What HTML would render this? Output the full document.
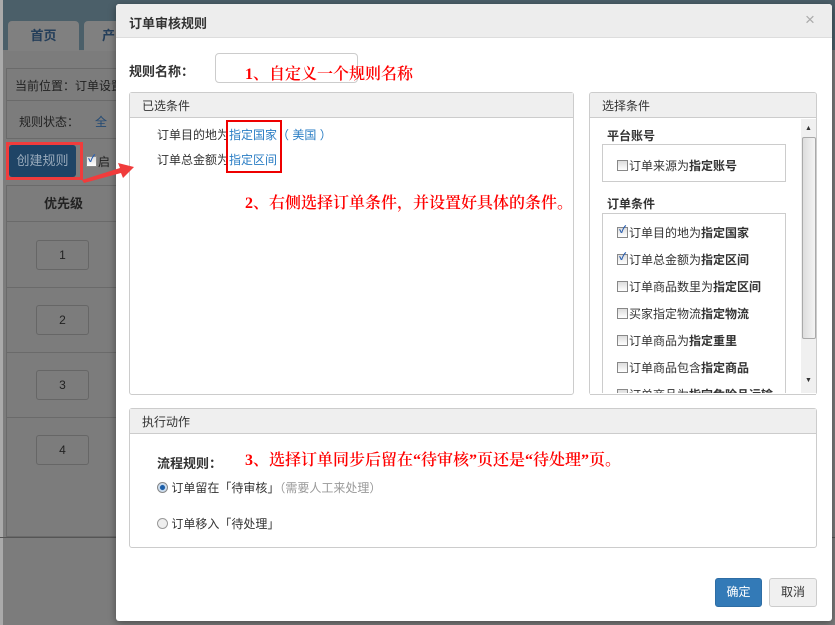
<!DOCTYPE html>
<html><head><meta charset="utf-8"><style>
*{box-sizing:border-box;margin:0;padding:0}
body{width:835px;height:625px;position:relative;overflow:hidden;background:#7c7c7c;font-family:"Liberation Sans","Noto Sans CJK SC",sans-serif;font-size:12px;color:#333}
.a{position:absolute;white-space:nowrap}
.red{color:#f00;font-family:"Liberation Serif","Noto Serif CJK SC",serif;font-size:16px;font-weight:600;white-space:nowrap}
.cb{display:inline-block;width:11px;height:11px;border:1px solid #888;background:linear-gradient(#ddd,#fff);vertical-align:-1px;margin-right:1px;position:relative}
.cb.on::after{content:"✓";position:absolute;left:1px;top:-3px;font-size:10px;line-height:12px;color:#2a5fb0;font-weight:bold}
.panel{position:absolute;border:1px solid #ccc;border-radius:3px;background:#fff}
.ph{height:25px;background:#efefef;border-bottom:1px solid #ccc;padding:4px 12px;font-size:12px;color:#333}
</style></head><body>
<div class="a" style="left:0;top:0;width:835px;height:50px;background:#4b5f69"></div>
<div class="a" style="left:0;top:0;width:3px;height:625px;background:#aaa"></div>
<div class="a" style="left:8px;top:21px;width:71px;height:30px;background:#808080;border-radius:4px 4px 0 0;color:#243e5a;font-size:13px;font-weight:bold;text-align:center;line-height:30px">首页</div>
<div class="a" style="left:84px;top:21px;width:40px;height:30px;background:#808080;border-radius:4px 4px 0 0;color:#243e5a;font-size:13px;font-weight:bold;padding-left:18px;line-height:30px">产</div>
<div class="a" style="left:6px;top:68px;width:120px;height:33px;border:1px solid #6a6a6a;padding:8px 8px;color:#222;overflow:hidden">当前位置：订单设置</div>
<div class="a" style="left:6px;top:101px;width:120px;height:38px;border:1px solid #6a6a6a;border-top:none;padding:12px 12px;color:#222">规则状态：<span style="color:#234a74;margin-left:16px">全</span></div>
<div class="a" style="left:6px;top:142px;width:77px;height:38px;border:3px solid #f03c3c"></div>
<div class="a" style="left:9px;top:145px;width:67px;height:32px;background:#1f4466;border-radius:3px;color:#9ab;text-align:center;line-height:32px;font-size:13px">创建规则</div>
<div class="a" style="left:86px;top:153px;color:#222"><span class="cb on"></span>启</div>
<div class="a" style="left:6px;top:185px;width:120px;height:352px;border:1px solid #6a6a6a"></div>
<div class="a" style="left:6px;top:185px;width:115px;height:37px;border-bottom:1px solid #6a6a6a;text-align:center;line-height:37px;font-weight:bold;font-size:13px;color:#222">优先级</div>
<div class="a" style="left:6px;top:287px;width:120px;border-top:1px solid #6a6a6a"></div>
<div class="a" style="left:6px;top:352px;width:120px;border-top:1px solid #6a6a6a"></div>
<div class="a" style="left:6px;top:417px;width:120px;border-top:1px solid #6a6a6a"></div>
<div class="a" style="left:36px;top:240px;width:53px;height:30px;border:1px solid #666;border-radius:3px;text-align:center;line-height:28px;color:#222">1</div>
<div class="a" style="left:36px;top:305px;width:53px;height:30px;border:1px solid #666;border-radius:3px;text-align:center;line-height:28px;color:#222">2</div>
<div class="a" style="left:36px;top:370px;width:53px;height:30px;border:1px solid #666;border-radius:3px;text-align:center;line-height:28px;color:#222">3</div>
<div class="a" style="left:36px;top:435px;width:53px;height:30px;border:1px solid #666;border-radius:3px;text-align:center;line-height:28px;color:#222">4</div>
<div class="a" style="left:0;top:537px;width:835px;border-top:1px solid #555"></div>
<div class="a" style="left:116px;top:4px;width:716px;height:617px;background:#fff;border-radius:3px;box-shadow:0 2px 8px rgba(0,0,0,.4)"></div>
<div class="a" style="left:116px;top:4px;width:716px;height:34px;background:#ededed;border-bottom:1px solid #ddd;border-radius:3px 3px 0 0;padding:9px 13px;font-weight:bold;font-size:13px;color:#333">订单审核规则</div>
<div class="a" style="left:805px;top:10px;color:#aaa;font-size:17px">×</div>
<div class="a" style="left:129px;top:61px;font-weight:bold;font-size:13px;color:#333">规则名称：</div>
<div class="a" style="left:215px;top:53px;width:143px;height:30px;border:1px solid #ccc;border-radius:4px"></div>
<div class="a red" style="left:245px;top:61px">1、自定义一个规则名称</div>
<div class="panel" style="left:129px;top:92px;width:445px;height:303px"><div class="ph">已选条件</div></div>
<div class="a" style="left:157px;top:126px;color:#333">订单目的地为<span style="color:#2a7dc4">指定国家</span><span style="color:#2a7dc4">（ 美国 ）</span></div>
<div class="a" style="left:157px;top:151px;color:#333">订单总金额为<span style="color:#2a7dc4">指定区间</span></div>
<div class="a" style="left:226px;top:120px;width:56px;height:53px;border:2px solid #e00"></div>
<div class="a red" style="left:245px;top:190px">2、右侧选择订单条件，并设置好具体的条件。</div>
<div class="panel" style="left:589px;top:92px;width:228px;height:303px;overflow:hidden"><div class="ph">选择条件</div>
<div style="position:absolute;left:211px;top:26px;width:16px;height:276px;background:#f0f0f0"></div>
<div style="position:absolute;left:212px;top:44px;width:14px;height:202px;background:linear-gradient(90deg,#ddd,#f4f4f4);border:1px solid #aaa;border-radius:2px"></div>
<div style="position:absolute;left:215px;top:32px;font-size:7px;color:#333">▲</div>
<div style="position:absolute;left:215px;top:284px;font-size:7px;color:#333">▼</div>
</div>
<div class="a" style="left:607px;top:127px;font-weight:bold;font-size:12px">平台账号</div>
<div class="a" style="left:602px;top:144px;width:184px;height:38px;border:1px solid #ccc;padding:12px 14px"><span class="cb"></span>订单来源为<b>指定账号</b></div>
<div class="a" style="left:607px;top:195px;font-weight:bold">订单条件</div>
<div class="a" style="left:602px;top:213px;width:184px;height:182px;border:1px solid #ccc;border-bottom:none;padding:6px 14px;line-height:27px;overflow:hidden">
<div><span class="cb on"></span>订单目的地为<b>指定国家</b></div>
<div><span class="cb on"></span>订单总金额为<b>指定区间</b></div>
<div><span class="cb"></span>订单商品数里为<b>指定区间</b></div>
<div><span class="cb"></span>买家指定物流<b>指定物流</b></div>
<div><span class="cb"></span>订单商品为<b>指定重里</b></div>
<div><span class="cb"></span>订单商品包含<b>指定商品</b></div>
<div><span class="cb"></span>订单商品为<b>指定危险品运输</b></div>
</div>
<div class="a" style="left:590px;top:393px;width:226px;height:2px;background:#fff;border-bottom:1px solid #ccc"></div>
<div class="panel" style="left:129px;top:408px;width:688px;height:140px"><div class="ph">执行动作</div></div>
<div class="a" style="left:157px;top:453px;font-weight:bold;font-size:13px">流程规则：</div>
<div class="a red" style="left:245px;top:447px">3、选择订单同步后留在“待审核”页还是“待处理”页。</div>
<div class="a" style="left:157px;top:479px;color:#333"><span style="display:inline-block;width:11px;height:11px;border-radius:50%;border:1px solid #888;background:radial-gradient(#1d5fa8 35%,#cde 45%);vertical-align:-1px"></span> 订单留在「待审核」<span style="color:#999">（需要人工来处理）</span></div>
<div class="a" style="left:157px;top:515px;color:#333"><span style="display:inline-block;width:11px;height:11px;border-radius:50%;border:1px solid #999;background:#eee;vertical-align:-1px"></span> 订单移入「待处理」</div>
<div class="a" style="left:715px;top:578px;width:47px;height:29px;background:#337ab7;border:1px solid #2e6da4;border-radius:3px;color:#fff;text-align:center;line-height:27px">确定</div>
<div class="a" style="left:769px;top:578px;width:48px;height:29px;background:#f0f0f0;border:1px solid #ccc;border-radius:3px;color:#333;text-align:center;line-height:27px">取消</div>
<svg class="a" style="left:78px;top:155px" width="60" height="30"><polygon points="4,25 42,13 40,8 56,12 45,23 43,18 6,28" fill="#f03c3c"/></svg>
</body></html>
